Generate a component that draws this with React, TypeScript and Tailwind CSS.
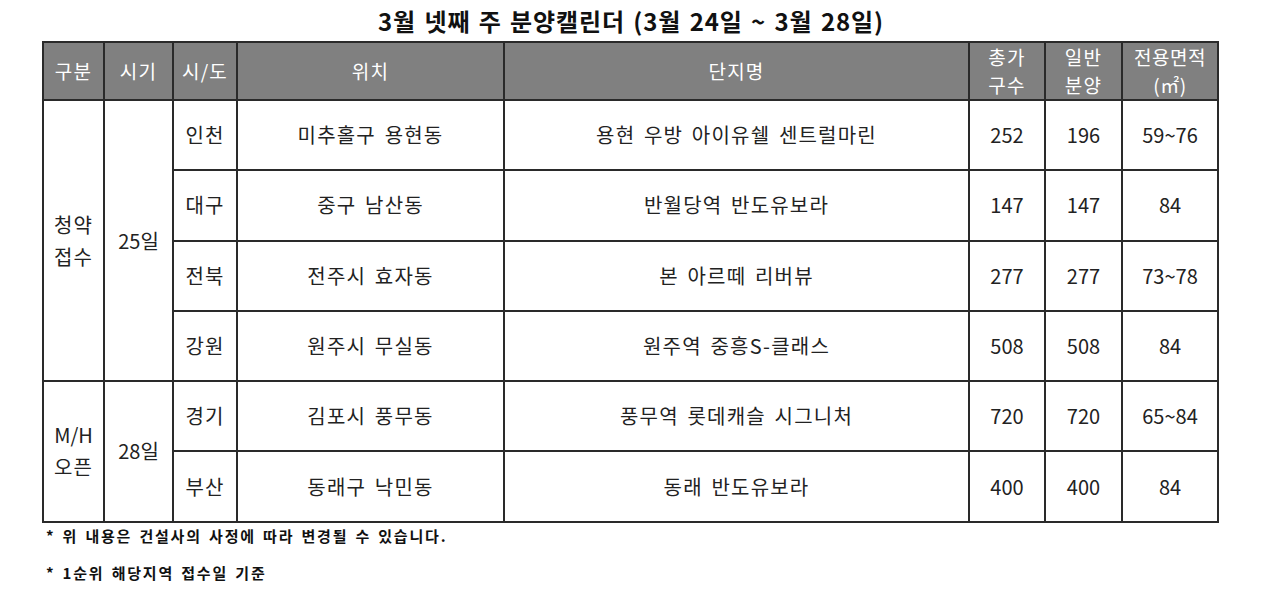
const font = { fontFamily: '"Noto Sans CJK KR", "Noto Sans", sans-serif' };

type Row = { region: string; loc: string; name: string; total: string; general: string; area: string };

const rows: Row[] = [
  { region: '인천', loc: '미추홀구 용현동', name: '용현 우방 아이유쉘 센트럴마린', total: '252', general: '196', area: '59~76' },
  { region: '대구', loc: '중구 남산동', name: '반월당역 반도유보라', total: '147', general: '147', area: '84' },
  { region: '전북', loc: '전주시 효자동', name: '본 아르떼 리버뷰', total: '277', general: '277', area: '73~78' },
  { region: '강원', loc: '원주시 무실동', name: '원주역 중흥S-클래스', total: '508', general: '508', area: '84' },
  { region: '경기', loc: '김포시 풍무동', name: '풍무역 롯데캐슬 시그니처', total: '720', general: '720', area: '65~84' },
  { region: '부산', loc: '동래구 낙민동', name: '동래 반도유보라', total: '400', general: '400', area: '84' },
];

const th = 'border-2 border-[#2a2a2a] bg-[#808080] text-white text-[19px] font-normal leading-[28px] p-0';
const td = 'border-2 border-[#2a2a2a] p-0 text-center';
const kr = 'tracking-[1.2px] [word-spacing:3px]';

export default function App() {
  return (
    <div className="w-[1262px] h-[602px] bg-white text-[#222] overflow-hidden" style={font}>
      <h1 className="text-center text-[24px] font-bold leading-[41px] tracking-[0.9px] [word-spacing:2px] text-[#111]">
        3월 넷째 주 분양캘린더 (3월 24일 ~ 3월 28일)
      </h1>
      <table className="ml-[42px] w-[1175px] border-collapse table-fixed text-[20px]">
        <colgroup>
          <col className="w-[61px]" />
          <col className="w-[69px]" />
          <col className="w-[64px]" />
          <col className="w-[267px]" />
          <col className="w-[465px]" />
          <col className="w-[76px]" />
          <col className="w-[77px]" />
          <col className="w-[96px]" />
        </colgroup>
        <thead>
          <tr className={`h-[57px] ${kr}`}>
            <th className={th}>구분</th>
            <th className={th}>시기</th>
            <th className={th}>시/도</th>
            <th className={th}>위치</th>
            <th className={th}>단지명</th>
            <th className={th}>총가<br />구수</th>
            <th className={th}>일반<br />분양</th>
            <th className={`${th} whitespace-nowrap tracking-[0.5px]`}>전용면적<br />(㎡)</th>
          </tr>
        </thead>
        <tbody>
          {rows.map((r, i) => (
            <tr key={r.region} className="h-[70.3px]">
              {i === 0 && (
                <>
                  <td rowSpan={4} className={`${td} ${kr} leading-[32px]`}>청약<br />접수</td>
                  <td rowSpan={4} className={td}>25일</td>
                </>
              )}
              {i === 4 && (
                <>
                  <td rowSpan={2} className={`${td} leading-[32px]`}>M/H<br /><span className={kr}>오픈</span></td>
                  <td rowSpan={2} className={td}>28일</td>
                </>
              )}
              <td className={`${td} ${kr}`}>{r.region}</td>
              <td className={`${td} ${kr}`}>{r.loc}</td>
              <td className={`${td} ${kr}`}>{r.name}</td>
              <td className={td}>{r.total}</td>
              <td className={td}>{r.general}</td>
              <td className={td}>{r.area}</td>
            </tr>
          ))}
        </tbody>
      </table>
      <div className="ml-[46px] mt-[1px] flex flex-col gap-[13px] text-[15px] font-bold text-[#111] leading-[24px] tracking-[1.8px] [word-spacing:2px]">
        <p>* 위 내용은 건설사의 사정에 따라 변경될 수 있습니다.</p>
        <p>* 1순위 해당지역 접수일 기준</p>
      </div>
    </div>
  );
}
